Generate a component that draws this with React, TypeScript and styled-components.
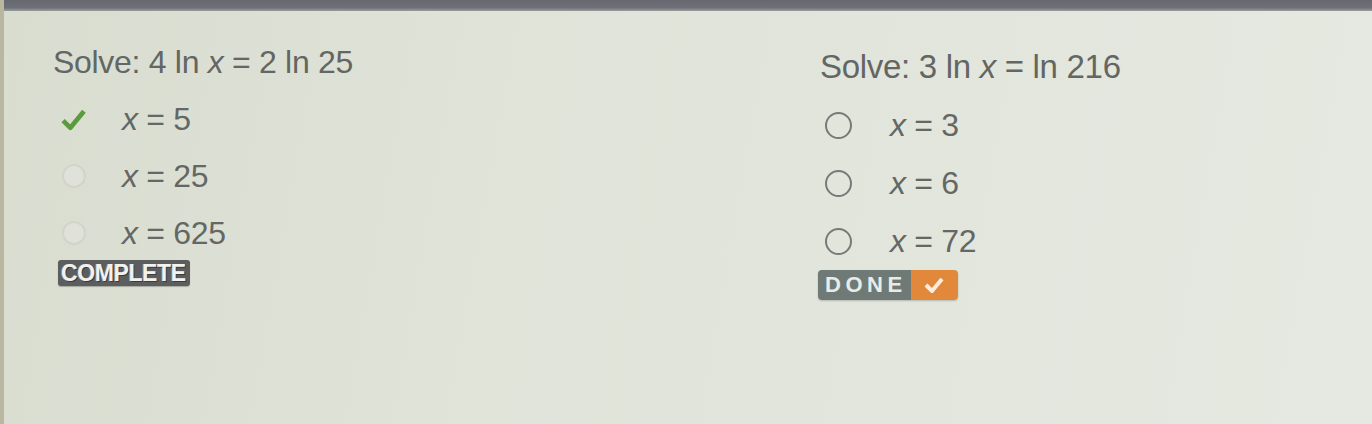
import React from "react";
import styled, { createGlobalStyle } from "styled-components";

const Global = createGlobalStyle`
  html, body { margin: 0; padding: 0; }
  body {
    width: 1372px;
    height: 424px;
    overflow: hidden;
    font-family: "Liberation Sans", Arial, sans-serif;
  }
`;

const Screen = styled.div`
  width: 1372px;
  height: 424px;
  display: flex;
  flex-direction: column;
  background: linear-gradient(100deg, #d9ddd0 0%, #dfe3d8 35%, #e2e6dd 70%, #e6e9e1 100%);
  box-sizing: border-box;
  border-left: 4px solid #b9b79f;
`;

const TopBar = styled.div`
  height: 11px;
  flex: none;
  background: linear-gradient(180deg, #65696f 0%, #6d7177 70%, #9a9c9c 100%);
`;

const Columns = styled.div`
  display: flex;
  flex: 1;
`;

const Column = styled.div<{ $left: number; $top: number; $width: number }>`
  width: ${(p) => p.$width}px;
  padding-left: ${(p) => p.$left}px;
  padding-top: ${(p) => p.$top}px;
  display: flex;
  flex-direction: column;
  box-sizing: border-box;
`;

const Title = styled.div<{ $size: number }>`
  font-size: ${(p) => p.$size}px;
  line-height: 36px;
  color: #636663;
  letter-spacing: -0.3px;
  white-space: pre;
`;

const Options = styled.div<{ $gap: number; $mt: number }>`
  display: flex;
  flex-direction: column;
  gap: ${(p) => p.$gap}px;
  margin-top: ${(p) => p.$mt}px;
`;

const Row = styled.div`
  display: flex;
  align-items: center;
  height: 36px;
`;

const Mark = styled.div<{ $w: number; $pad: number }>`
  width: ${(p) => p.$w}px;
  padding-left: ${(p) => p.$pad}px;
  box-sizing: border-box;
  flex: none;
  display: flex;
  align-items: center;
`;

const Radio = styled.span<{ $faint?: boolean }>`
  width: ${(p) => (p.$faint ? 24 : 27)}px;
  height: ${(p) => (p.$faint ? 24 : 27)}px;
  border-radius: 50%;
  box-sizing: border-box;
  border: ${(p) => (p.$faint ? "2px solid #d2d4ca" : "2.5px solid #777a78")};
  background: ${(p) => (p.$faint ? "#e0e2d9" : "transparent")};
`;

const Answer = styled.span`
  font-size: 32px;
  line-height: 36px;
  color: #646764;
  white-space: pre;
  letter-spacing: -0.3px;
`;

const Var = styled.i`
  font-style: italic;
`;

const CompleteBadge = styled.div`
  align-self: flex-start;
  margin-top: 9px;
  margin-left: 5px;
  background: #5b5d5f;
  border-radius: 3px;
  padding: 0 4px 0 3px;
  height: 26px;
  display: flex;
  align-items: center;
  font-weight: 900;
  font-size: 23px;
  letter-spacing: -0.4px;
  color: #f1f1ee;
  text-shadow: 1px 1px 0 #3a3b3c, -1px 0 0 #8a8b8c;
  box-shadow: 0 1px 1px rgba(0, 0, 0, 0.25);
`;

const DoneBadge = styled.div`
  align-self: flex-start;
  margin-top: 11px;
  margin-left: -2px;
  display: flex;
  height: 30px;
  border-radius: 4px;
  overflow: hidden;
  box-shadow: 0 1px 2px rgba(0, 0, 0, 0.2);
`;

const DoneText = styled.span`
  background: #6f7a77;
  color: #e8ece8;
  font-weight: 700;
  font-size: 22px;
  letter-spacing: 4.5px;
  padding: 0 4px 0 7px;
  display: flex;
  align-items: center;
`;

const DoneCheck = styled.span`
  background: #e2883b;
  width: 47px;
  display: flex;
  align-items: center;
  justify-content: center;
`;

const Eq = ({ rhs }: { rhs: string }) => (
  <Answer>
    <Var>x</Var> = {rhs}
  </Answer>
);

export default function App() {
  return (
    <>
      <Global />
      <Screen>
        <TopBar />
        <Columns>
          <Column $left={49} $top={33} $width={816}>
            <Title $size={32}>
              Solve: 4 ln <Var>x</Var> = 2 ln 25
            </Title>
            <Options $gap={21} $mt={21}>
              <Row>
                <Mark $w={69} $pad={8}>
                  <svg width="25" height="23" viewBox="0 0 24 22">
                    <path d="M2 12 L9 19 L22 3" fill="none" stroke="#5b9a3d" strokeWidth="4.5" strokeLinejoin="round" />
                  </svg>
                </Mark>
                <Eq rhs="5" />
              </Row>
              <Row>
                <Mark $w={69} $pad={9}>
                  <Radio $faint />
                </Mark>
                <Eq rhs="25" />
              </Row>
              <Row>
                <Mark $w={69} $pad={9}>
                  <Radio $faint />
                </Mark>
                <Eq rhs="625" />
              </Row>
            </Options>
            <CompleteBadge>COMPLETE</CompleteBadge>
          </Column>
          <Column $left={0} $top={38} $width={552}>
            <Title $size={33}>
              Solve: 3 ln <Var>x</Var> = ln 216
            </Title>
            <Options $gap={22} $mt={22}>
              <Row>
                <Mark $w={70} $pad={5}>
                  <Radio />
                </Mark>
                <Eq rhs="3" />
              </Row>
              <Row>
                <Mark $w={70} $pad={5}>
                  <Radio />
                </Mark>
                <Eq rhs="6" />
              </Row>
              <Row>
                <Mark $w={70} $pad={5}>
                  <Radio />
                </Mark>
                <Eq rhs="72" />
              </Row>
            </Options>
            <DoneBadge>
              <DoneText>DONE</DoneText>
              <DoneCheck>
                <svg width="22" height="18" viewBox="0 0 22 18">
                  <path d="M3 9 L9 15 L19 3" fill="none" stroke="#fbeee0" strokeWidth="4" strokeLinejoin="round" />
                </svg>
              </DoneCheck>
            </DoneBadge>
          </Column>
        </Columns>
      </Screen>
    </>
  );
}
